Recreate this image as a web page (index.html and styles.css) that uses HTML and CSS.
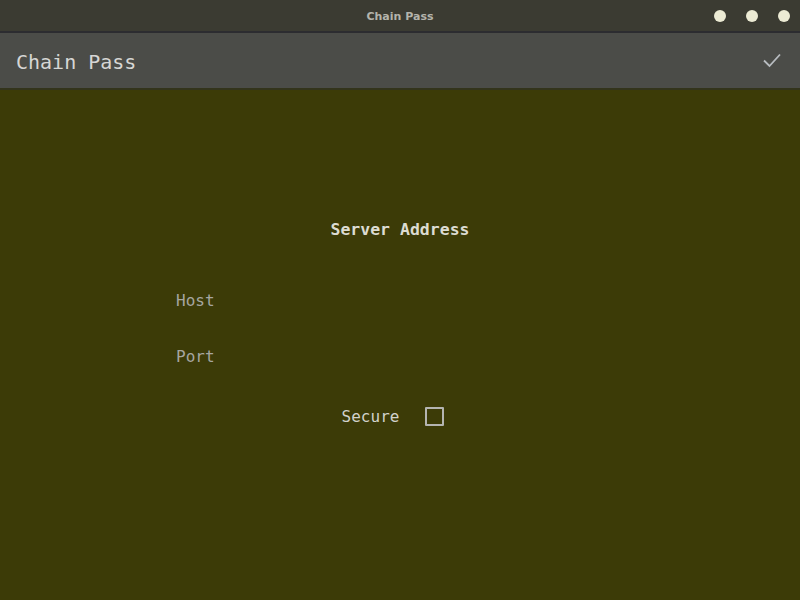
FILE: index.html
```html
<!DOCTYPE html>
<html>
<head>
<meta charset="utf-8">
<link rel="stylesheet" href="styles.css">
</head>
<body>
<div class="window">
  <div class="titlebar">
    <div class="title">Chain Pass</div>
    <div class="dots"><span class="dot"></span><span class="dot"></span><span class="dot"></span></div>
  </div>
  <div class="toolbar">
    <div class="app-title">Chain Pass</div>
    <svg class="check" width="20" height="16" viewBox="0 0 20 16"><path d="M2 8.5 L7.5 14 L18 2.5" fill="none" stroke="#b8bcc0" stroke-width="1.8"/></svg>
  </div>
  <div class="content">
    <div class="heading">Server Address</div>
    <div class="field"><input class="input" placeholder="Host"></div>
    <div class="field"><input class="input" placeholder="Port"></div>
    <label class="secure"><span>Secure</span><span class="box"></span></label>
  </div>
</div>
</body>
</html>
```
FILE: styles.css
```css
html, body { margin: 0; padding: 0; }
body { width: 800px; height: 600px; overflow: hidden; background: #3c3b07; font-family: "DejaVu Sans Mono", monospace; }
.window { display: flex; flex-direction: column; height: 600px; }
.titlebar { height: 31px; background: #3b3b32; border-bottom: 2px solid #2c2c30; display: flex; align-items: center; justify-content: center; position: relative; }
.title { font-family: "DejaVu Sans", sans-serif; font-weight: bold; font-size: 11px; color: #b4b4ac; margin-top: 2px; }
.dots { position: absolute; right: 10px; top: 10px; display: flex; gap: 20px; }
.dot { width: 12px; height: 12px; border-radius: 50%; background: #ecebd4; }
.toolbar { height: 55px; background: #4b4c48; border-bottom: 2px solid #33341c; display: flex; align-items: center; justify-content: space-between; padding: 0 18px 0 16px; }
.app-title { font-size: 20px; color: #d6d6d4; margin-top: 2px; }
.check { display: block; margin-top: -1px; }
.content { flex: 1; display: flex; flex-direction: column; align-items: center; padding-top: 130px; }
.heading { font-weight: bold; font-size: 16.5px; color: #dcdcd2; line-height: 20px; }
.field { width: 448px; }
.field:nth-child(2) { margin-top: 51px; }
.field:nth-child(3) { margin-top: 36px; }
.input { width: 100%; box-sizing: border-box; background: transparent; border: none; outline: none; padding: 0; font-family: "DejaVu Sans Mono", monospace; font-size: 16px; line-height: 20px; height: 20px; color: #dcdcd2; }
.input::placeholder { color: #a6a6a0; }
.secure { margin-top: 40px; display: flex; align-items: center; gap: 26px; font-size: 16px; color: #d2d2cc; margin-right: 14px; }
.box { width: 15px; height: 15px; border: 2px solid #b4b4b0; border-radius: 1px; }
```
